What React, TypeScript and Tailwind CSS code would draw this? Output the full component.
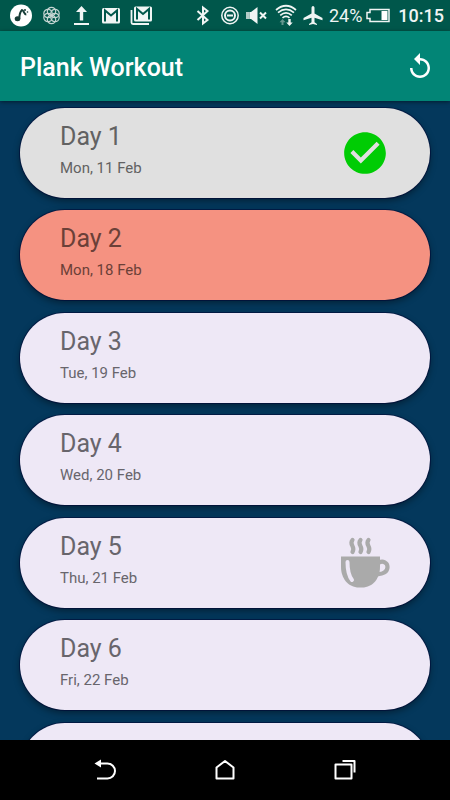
import React from 'react';

interface WorkoutDay {
  id: number;
  date: string;
  status: 'done' | 'missed' | 'planned' | 'rest';
}

const days: WorkoutDay[] = [
  { id: 1, date: 'Mon, 11 Feb', status: 'done' },
  { id: 2, date: 'Mon, 18 Feb', status: 'missed' },
  { id: 3, date: 'Tue, 19 Feb', status: 'planned' },
  { id: 4, date: 'Wed, 20 Feb', status: 'planned' },
  { id: 5, date: 'Thu, 21 Feb', status: 'rest' },
  { id: 6, date: 'Fri, 22 Feb', status: 'planned' },
];

const cardShape =
  'w-full h-[90px] rounded-full shadow-[0_0_0_1px_rgba(0,0,50,0.5),0_3px_7px_rgba(0,0,0,0.4)]';

const cardColors = {
  done: 'bg-[#e0e0e0] text-[#626262]',
  missed: 'bg-[#f59281] text-[#6b4038]',
  planned: 'bg-[#eee8f6] text-[#68656c]',
  rest: 'bg-[#eee8f6] text-[#68656c]',
};

const StatusBar: React.FC = () => (
  <div className="h-[31px] shrink-0 bg-[#00574b] flex items-center justify-between px-1.5 text-[#f0f5f4]">
    <div className="flex items-center" aria-hidden="true">
      {/* Music app */}
      <svg className="w-[30px] h-[31px]" viewBox="0 0 30 31">
        <circle cx="15" cy="15.500" r="11" fill="#fff" />
        <ellipse cx="11.500" cy="18.800" rx="2.800" ry="2.500" fill="#163d37" />
        <path d="M13.300 19c0-4 .5-7 2.700-9 1.800 0 1.900 4.500 4.300 4.500" fill="none" stroke="#163d37" strokeWidth="2" />
        <circle cx="19" cy="10" r="1" fill="#163d37" />
        <circle cx="21.500" cy="12" r=".8" fill="#163d37" />
      </svg>
      {/* Rosette */}
      <svg className="w-[30px] h-[31px]" viewBox="0 0 30 31" fill="none" stroke="#c3d4d1" strokeWidth="1.200">
        <circle cx="15.500" cy="11.500" r="4.200" />
        <circle cx="19" cy="13.500" r="4.200" />
        <circle cx="19" cy="17.500" r="4.200" />
        <circle cx="15.500" cy="19.500" r="4.200" />
        <circle cx="12" cy="17.500" r="4.200" />
        <circle cx="12" cy="13.500" r="4.200" />
      </svg>
      {/* Upload */}
      <svg className="w-[30px] h-[31px]" viewBox="0 0 30 31" fill="currentColor">
        <path d="M15.500 6l5.500 6h-3.800v8.500h-3.400V12H10zM8 23h15v2H8z" />
      </svg>
      {/* Mail */}
      <svg className="w-[30px] h-[31px]" viewBox="0 0 30 31">
        <rect x="6" y="8" width="18" height="15.500" rx="1.500" fill="currentColor" />
        <path d="M9 21.500V10.500l6 5 6-5v11" fill="none" stroke="#00574b" strokeWidth="2" />
      </svg>
      {/* Mail stack */}
      <svg className="w-[30px] h-[31px]" viewBox="0 0 30 31">
        <path d="M5.500 10v12.500q0 1.500 1.500 1.500h16" fill="none" stroke="currentColor" strokeWidth="1.800" />
        <rect x="8" y="6.500" width="18" height="15" rx="1.500" fill="currentColor" />
        <path d="M11 19.500V9l6 5 6-5v10.500" fill="none" stroke="#00574b" strokeWidth="2" />
      </svg>
    </div>
    <div className="flex items-center">
      {/* Bluetooth */}
      <svg className="w-7 h-[31px]" viewBox="0 0 28 31" fill="none" stroke="currentColor" strokeWidth="2" aria-hidden="true">
        <path d="M8.500 11l10 9-4.500 3.500v-16l4.500 3.500-10 9" />
      </svg>
      {/* Do not disturb */}
      <svg className="w-7 h-[31px]" viewBox="0 0 28 31" fill="none" stroke="currentColor" aria-hidden="true">
        <circle cx="13" cy="15.500" r="8.200" strokeWidth="1.500" />
        <circle cx="13" cy="15.500" r="5" strokeWidth="2" />
        <path d="M10 15.500h6" strokeWidth="2" />
      </svg>
      {/* Muted */}
      <svg className="w-7 h-[31px]" viewBox="0 0 28 31" aria-hidden="true">
        <path d="M1 12h3.500v7H1z" fill="#b3cbc7" />
        <path d="M4.500 12H6l6.500-5v17L6 19H4.500z" fill="currentColor" />
        <path d="M15 12.500l6 6m0-6l-6 6" fill="none" stroke="currentColor" strokeWidth="2" />
      </svg>
      {/* Wi-Fi */}
      <svg className="w-7 h-[31px]" viewBox="0 0 28 31" fill="none" stroke="currentColor" strokeWidth="1.700" aria-hidden="true">
        <path d="M3 10q10-8.500 20 0M5 12.700q8-6.500 16 0M7.200 15.300q5.800-5 11.600 0M9.500 17.800q3.500-3 7 0" />
        <path d="M9.500 19l3 3.200h-2V25H8.500v-2.800h-2z" fill="#64968e" stroke="none" />
        <path d="M16.500 26l-3.200-3.500h2V19h2.400v3.500h2z" fill="currentColor" stroke="none" />
      </svg>
      {/* Airplane */}
      <svg className="w-7 h-[31px]" viewBox="0 0 28 31" fill="currentColor" aria-hidden="true">
        <path d="M12 6c1 0 1.500 1 1.500 2v5.500l8 4.500v2.200l-8-2.400v4.400l2.500 1.700V25l-4-1-4 1v-1.100l2.500-1.700v-4.400l-8 2.400V18l8-4.500V8c0-1 .5-2 1.500-2z" />
      </svg>
      <span className="text-[18px] leading-6">24%</span>
      <svg className="w-6 h-[31px] ml-1 mr-2" viewBox="0 0 24 31" aria-hidden="true">
        <path d="M4 9.500h19v12H4v-3H1v-6h3z" fill="none" stroke="currentColor" strokeWidth="1.500" />
        <path d="M15.500 11h6v9h-6z" fill="#fff" />
      </svg>
      <span className="text-[18px] leading-6 font-medium">10:15</span>
    </div>
  </div>
);

const CheckIcon: React.FC = () => (
  <svg className="w-[50px] h-[50px]" viewBox="0 0 24 24" role="img" aria-label="Completed">
    <path fill="#00cc04" d="M12 2C6.480 2 2 6.480 2 12s4.480 10 10 10 10-4.480 10-10S17.520 2 12 2zm-2 15l-5-5 1.410-1.410L10 14.170l7.590-7.590L19 8l-9 9z" />
  </svg>
);

const CupIcon: React.FC = () => (
  <svg className="w-[50px] h-[52px]" viewBox="0 0 50 52" fill="none" role="img" aria-label="Rest day">
    <g stroke="#aaa" strokeWidth="4.200" strokeLinecap="round">
      <path d="M12.500 3c-4 5 3.500 6.500 0 12" />
      <path d="M20.500 3c-4 5 3.500 6.500 0 12" />
      <path d="M28.500 3c-4 5 3.500 6.500 0 12" />
      <path d="M39 25.500c4-2 8.500 0 8.500 4.500 0 5-5 7.500-10.500 7" />
    </g>
    <path d="M1 19.500h39V30c0 11-7 20.500-18 20.500h-3C8 50.500 1 41 1 30z" fill="#aaa" />
    <path d="M7.500 25c0 8 1 13.500 4.500 18" stroke="#eee8f6" strokeWidth="4" strokeLinecap="round" />
  </svg>
);

const DayCard: React.FC<{ day: WorkoutDay }> = ({ day }) => (
  <li className="odd:mb-3 even:mb-[13px]">
    <button
      type="button"
      className={`${cardShape} flex items-center justify-between px-10 text-left ${cardColors[day.status]}`}
    >
      <span className="flex flex-col gap-1.5 pb-1.5">
        <span className="text-[25px] leading-[30px]">Day {day.id}</span>
        <span className="text-[15px] leading-5">{day.date}</span>
      </span>
      {day.status === 'done' && <CheckIcon />}
      {day.status === 'rest' && <CupIcon />}
    </button>
  </li>
);

const App: React.FC = () => {
  return (
    <div className="h-screen flex flex-col bg-[#04385c] font-[Roboto,sans-serif]">
      <StatusBar />
      <header className="relative h-[70px] shrink-0 bg-[#028576] flex items-center justify-between pl-5 pr-4 text-white shadow-[0_1px_4px_rgba(0,0,0,0.5)]">
        <h1 className="text-[25px] leading-8 font-medium pt-1">Plank Workout</h1>
        <button type="button" aria-label="Restart">
          <svg className="w-7 h-8" viewBox="0 0 28 32" fill="currentColor">
            <path d="M14 8V3L8 9l6 6v-4.500c4 0 7.500 3.200 7.500 7.500s-3.500 7.500-7.500 7.500-7.500-3.200-7.500-7.500H4c0 5.700 4.500 10 10 10s10-4.300 10-10S19.500 8 14 8z" />
          </svg>
        </button>
      </header>

      <main className="flex-1 min-h-0 overflow-y-auto [scrollbar-width:none] px-5 pt-[7px]">
        <ul>
          {days.map(day => (
            <DayCard key={day.id} day={day} />
          ))}
          <li aria-hidden="true">
            <div className={`${cardShape} bg-[#eee8f6]`} />
          </li>
        </ul>
      </main>

      <nav className="relative h-[60px] shrink-0 bg-black text-white flex items-center justify-center gap-20">
        <button type="button" aria-label="Back">
          <svg className="w-10 h-10" viewBox="0 0 40 40" fill="none" stroke="currentColor" strokeWidth="2">
            <path d="M14 13.500h8.500a7.500 7.500 0 0 1 0 15H12" />
            <path d="M9.500 13.500l6.500-4v8z" fill="currentColor" stroke="none" />
          </svg>
        </button>
        <button type="button" aria-label="Home">
          <svg className="w-10 h-10" viewBox="0 0 40 40" fill="none" stroke="currentColor" strokeWidth="2" strokeLinejoin="round">
            <path d="M11.500 28.500v-11l8.500-6.500 8.500 6.500v11z" />
          </svg>
        </button>
        <button type="button" aria-label="Recent apps">
          <svg className="w-10 h-10" viewBox="0 0 40 40" fill="none" stroke="currentColor" strokeWidth="2" strokeLinejoin="round">
            <rect x="10.500" y="14.500" width="16" height="14" />
            <path d="M17.500 11h12v11.500" />
          </svg>
        </button>
      </nav>
    </div>
  );
};

export default App;
